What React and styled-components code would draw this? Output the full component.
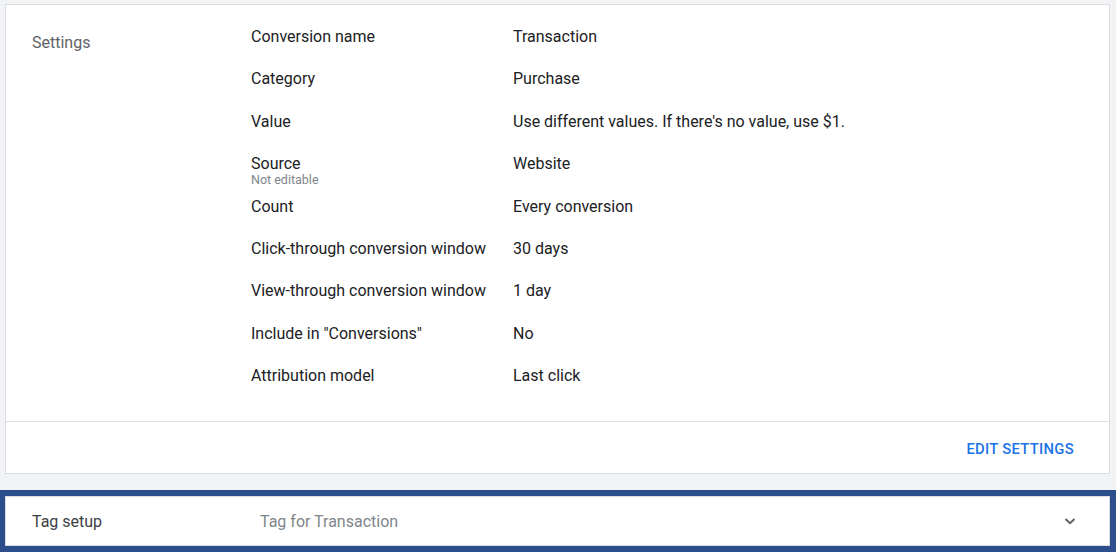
import React from "react";
import styled, { createGlobalStyle } from "styled-components";

const Global = createGlobalStyle`
  html, body { margin: 0; padding: 0; background: #f1f3f4; }
  body { font-family: Roboto, "Noto Sans", Arial, sans-serif; -webkit-font-smoothing: antialiased; }
`;

const Page = styled.div`
  padding: 4px 6px 0 5px;
  width: 1116px;
  height: 552px;
  box-sizing: border-box;
  overflow: hidden;
`;

const Card = styled.div`
  background: #fff;
  border: 1px solid #dadce0;
`;

const Section = styled.div`
  display: grid;
  grid-template-columns: 219px 262px 1fr;
  padding: 11px 0 23px 26px;
`;

const SectionTitle = styled.div`
  grid-column: 1;
  grid-row: 1 / span 9;
  padding-top: 17px;
  font-size: 16px;
  line-height: 20px;
  color: #5f6368;
`;

const Cell = styled.div`
  height: 42.4px;
  box-sizing: border-box;
  padding-top: 11px;
  font-size: 16px;
  line-height: 20px;
  color: #202124;
  overflow: visible;
  white-space: nowrap;
`;

const Note = styled.div`
  font-size: 12.5px;
  line-height: 12px;
  color: #80868b;
`;

const Footer = styled.div`
  border-top: 1px solid #e0e0e0;
  height: 52px;
  box-sizing: border-box;
  padding: 3px 35px 0 0;
  display: flex;
  align-items: center;
  justify-content: flex-end;
`;

const TextButton = styled.button`
  background: none;
  border: none;
  padding: 0;
  font-family: inherit;
  font-size: 14.8px;
  font-weight: 500;
  letter-spacing: 0.3px;
  color: #1a73e8;
  text-transform: uppercase;
  cursor: pointer;
`;

const TagCard = styled.div`
  margin-top: 22px;
  height: 50px;
  box-sizing: border-box;
  background: #fff;
  border: 1px solid #dadce0;
  box-shadow: 0 0 0 6px #2c4e8d;
  display: grid;
  grid-template-columns: 228px 1fr auto;
  align-items: center;
  padding: 1px 32px 0 26px;
`;

const TagLabel = styled.div`
  font-size: 16px;
  color: #3c4043;
`;

const TagValue = styled.div`
  font-size: 16px;
  color: #80868b;
`;

const rows = [
  ["Conversion name", "Transaction"],
  ["Category", "Purchase"],
  ["Value", "Use different values. If there's no value, use $1."],
  ["Source", "Website", "Not editable"],
  ["Count", "Every conversion"],
  ["Click-through conversion window", "30 days"],
  ["View-through conversion window", "1 day"],
  ['Include in "Conversions"', "No"],
  ["Attribution model", "Last click"],
];

const Chevron = () => (
  <svg width="14" height="10" viewBox="0 0 14 10">
    <path d="M2.5 3 L7 7.2 L11.5 3" fill="none" stroke="#5f6368" strokeWidth="2" />
  </svg>
);

export default function App() {
  return (
    <Page>
      <Global />
      <Card>
        <Section>
          <SectionTitle>Settings</SectionTitle>
          {rows.map(([label, value, note], i) => (
            <React.Fragment key={label}>
              <Cell style={{ gridRow: i + 1, gridColumn: 2 }}>
                {label}
                {note && <Note>{note}</Note>}
              </Cell>
              <Cell style={{ gridRow: i + 1, gridColumn: 3 }}>{value}</Cell>
            </React.Fragment>
          ))}
        </Section>
        <Footer>
          <TextButton>Edit settings</TextButton>
        </Footer>
      </Card>
      <TagCard>
        <TagLabel>Tag setup</TagLabel>
        <TagValue>Tag for Transaction</TagValue>
        <Chevron />
      </TagCard>
    </Page>
  );
}
